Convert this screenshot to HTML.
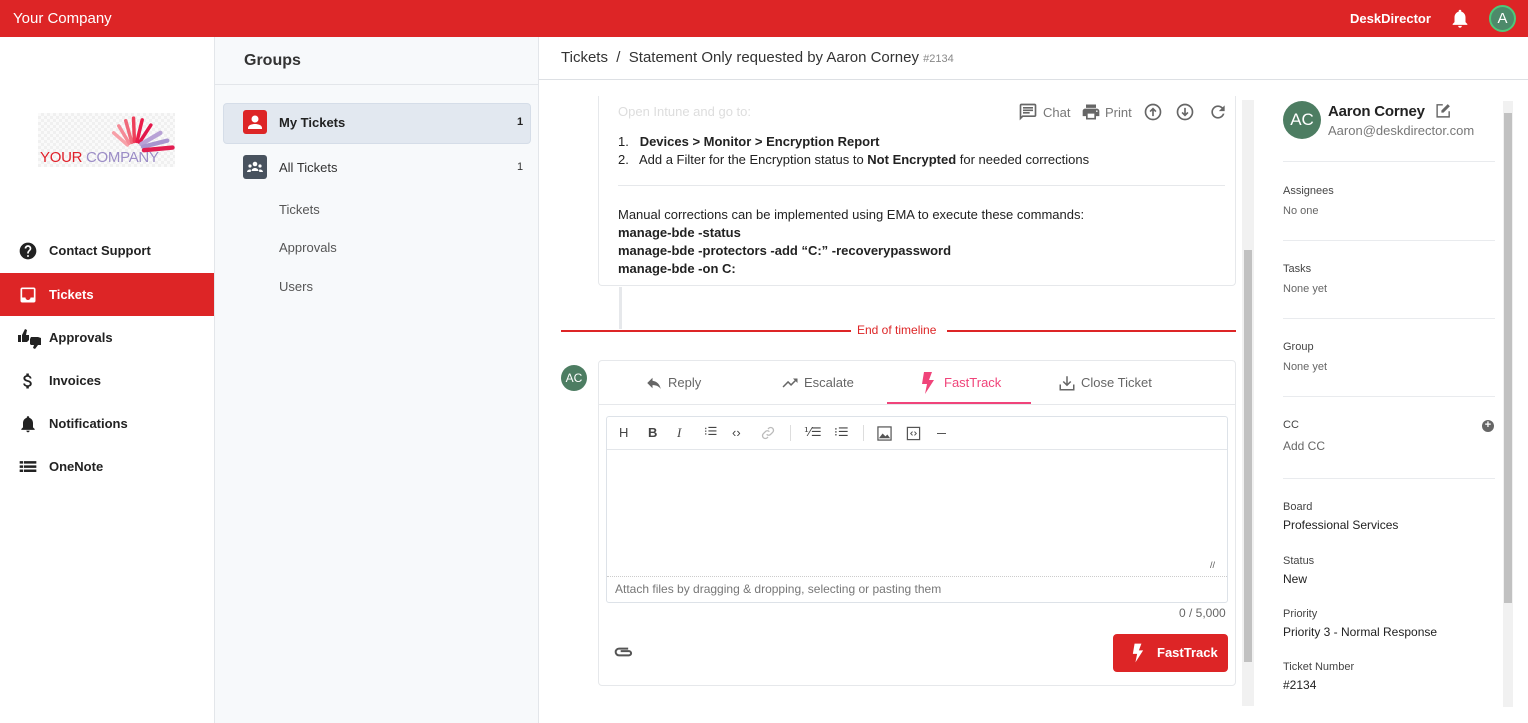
<!DOCTYPE html>
<html><head><meta charset="utf-8"><style>
*{box-sizing:border-box;margin:0;padding:0}
body{width:1528px;height:723px;overflow:hidden;font-family:"Liberation Sans",Arial,sans-serif;background:#fff;position:relative;color:#222}
.a{position:absolute}
.top{left:0;top:0;width:1528px;height:37px;background:#dd2526;color:#fff}
.nav{left:0;top:37px;width:215px;height:686px;background:#fff;border-right:1px solid #e3e6ea}
.ni{position:absolute;left:0;width:214px;height:43px;font-size:13px;font-weight:bold;color:#222;display:flex;align-items:center;padding-left:49px}
.ni svg{position:absolute;left:18px}
.grp{left:215px;top:37px;width:324px;height:686px;background:#f7f9fb;border-right:1px solid #e3e6ea}
.gi{position:absolute;left:64px;font-size:13px;color:#555}
.lbl{font-size:11px;color:#444;position:absolute;left:1283px}
.val{font-size:12px;color:#666;position:absolute;left:1283px}
.val2{font-size:13px;color:#222;position:absolute;left:1283px}
.hr{position:absolute;left:1283px;width:212px;height:1px;background:#e9ebee}
.tb{position:absolute;top:425px;color:#444;font-size:13px}
</style></head><body>
<div class="a top">
 <div class="a" style="left:13px;top:10px;font-size:15px">Your Company</div>
 <div class="a" style="left:1350px;top:11px;font-size:13px;font-weight:bold">DeskDirector</div>
 <svg class="a" style="left:1449px;top:7px" width="22" height="23" viewBox="0 0 24 24"><path fill="#fff" d="M12 22c1.1 0 2-.9 2-2h-4c0 1.1.9 2 2 2zm6-6v-5c0-3.07-1.63-5.64-4.5-6.32V4c0-.83-.67-1.5-1.5-1.5s-1.5.67-1.5 1.5v.68C7.64 5.36 6 7.92 6 11v5l-2 2v1h16v-1l-2-2z"/></svg>
 <div class="a" style="left:1489px;top:5px;width:27px;height:27px;border-radius:50%;background:#4d8a6a;border:2px solid #4ec97a;color:#fff;font-size:15px;text-align:center;line-height:23px">A</div>
</div>

<div class="a nav">
 <div class="a" style="left:38px;top:76px;width:137px;height:54px;background:repeating-conic-gradient(#f0f0f0 0 25%,#fafafa 0 50%) 0 0/6px 6px"></div>
 <svg class="a" style="left:98px;top:78px" width="78" height="40" viewBox="0 0 90 45">
  <g stroke-linecap="round" stroke-width="4" fill="none">
   <path d="M34 34 L18 20" stroke="#f7a0a8"/><path d="M36 32 L24 12" stroke="#f58a96"/><path d="M39 31 L32 6" stroke="#f06a7a"/><path d="M42 30 L41 3" stroke="#ee3e5a"/><path d="M45 30 L51 5" stroke="#ea1d4a"/><path d="M48 31 L61 11" stroke="#e3174a"/>
   <path d="M50 33 L72 20" stroke="#b8a2d6" stroke-width="5"/><path d="M52 36 L80 29" stroke="#a895cf" stroke-width="5"/><path d="M53 40 L86 37" stroke="#e21d50" stroke-width="5"/>
  </g></svg>
 <div class="a" style="left:40px;top:112px;font-size:15px;color:#e0202a;letter-spacing:-.3px">YOUR <span style="color:#9b8cc6">COMPANY</span></div>

 <div class="ni" style="top:192px"><svg width="20" height="20" viewBox="0 0 24 24"><path fill="#222" d="M12 2C6.48 2 2 6.48 2 12s4.48 10 10 10 10-4.48 10-10S17.52 2 12 2zm1 17h-2v-2h2v2zm2.07-7.75l-.9.92C13.45 12.9 13 13.5 13 15h-2v-.5c0-1.1.45-2.1 1.17-2.83l1.24-1.26c.37-.36.59-.86.59-1.41 0-1.1-.9-2-2-2s-2 .9-2 2H8c0-2.210 1.79-4 4-4s4 1.79 4 4c0 .88-.36 1.68-.93 2.25z"/></svg>Contact Support</div>
 <div class="ni" style="top:236px;background:#dd2526;color:#fff"><svg width="20" height="20" viewBox="0 0 24 24"><path fill="#fff" d="M19 3H5c-1.1 0-2 .9-2 2v14c0 1.1.9 2 2 2h14c1.1 0 2-.9 2-2V5c0-1.1-.9-2-2-2zm0 12h-4c0 1.66-1.34 3-3 3s-3-1.34-3-3H5V5h14v10z"/></svg>Tickets</div>
 <div class="ni" style="top:279px"><svg width="24" height="22" viewBox="0 0 24 22"><path fill="#222" d="M0 8h3v7H0zM4 8l3-6 2 1-1 5h3v5l-2 2H4z M13 10h7l3 1v7h-3l-3 4-2-1 1-3h-3l-1-1v-5z"/></svg>Approvals</div>
 <div class="ni" style="top:322px"><svg width="20" height="20" viewBox="0 0 24 24"><path fill="#222" d="M11.8 10.9c-2.27-.59-3-1.2-3-2.15 0-1.09 1.01-1.85 2.7-1.850 1.78 0 2.44.85 2.5 2.1h2.21c-.07-1.72-1.12-3.3-3.21-3.81V3h-3v2.16c-1.94.42-3.5 1.68-3.5 3.61 0 2.31 1.91 3.46 4.7 4.13 2.5.6 3 1.48 3 2.41 0 .69-.49 1.79-2.7 1.79-2.06 0-2.87-.92-2.98-2.1h-2.2c.12 2.19 1.76 3.42 3.68 3.83V21h3v-2.15c1.95-.37 3.5-1.5 3.5-3.55 0-2.84-2.43-3.81-4.7-4.4z"/></svg>Invoices</div>
 <div class="ni" style="top:365px"><svg width="20" height="20" viewBox="0 0 24 24"><path fill="#222" d="M12 22c1.1 0 2-.9 2-2h-4c0 1.1.9 2 2 2zm6-6v-5c0-3.07-1.63-5.64-4.5-6.32V4c0-.83-.67-1.5-1.5-1.5s-1.5.67-1.5 1.5v.68C7.64 5.36 6 7.920 6 11v5l-2 2v1h16v-1l-2-2z"/></svg>Notifications</div>
 <div class="ni" style="top:408px"><svg width="20" height="20" viewBox="0 0 24 24"><path fill="#222" d="M2 5h4v3H2zm5 0h15v3H7zM2 10h4v3H2zm5 0h15v3H7zM2 15h4v3H2zm5 0h15v3H7z"/></svg>OneNote</div>
</div>

<div class="a grp">
 <div class="a" style="left:0;top:0;width:323px;height:48px;border-bottom:1px solid #e3e6ea"></div>
 <div class="a" style="left:29px;top:15px;font-size:16px;font-weight:bold;color:#333">Groups</div>
 <div class="a" style="left:8px;top:66px;width:308px;height:41px;background:#e2e8f0;border:1px solid #d5dde8;border-radius:4px"></div>
 <div class="a" style="left:28px;top:73px;width:24px;height:24px;background:#dd2526;border-radius:3px"><svg width="24" height="24" viewBox="0 0 24 24"><circle cx="12" cy="9" r="3.5" fill="#fff"/><path d="M5 18c0-3 4-4 7-4s7 1 7 4v1H5z" fill="#fff"/></svg></div>
 <div class="a" style="left:64px;top:78px;font-size:13px;font-weight:bold;color:#222">My Tickets</div>
 <div class="a" style="left:302px;top:79px;font-size:11px;font-weight:bold">1</div>
 <div class="a" style="left:28px;top:118px;width:24px;height:24px;background:#48525e;border-radius:3px"><svg width="24" height="24" viewBox="0 0 24 24" fill="#fff"><circle cx="12" cy="9" r="2.3"/><circle cx="7" cy="11" r="1.6"/><circle cx="17" cy="11" r="1.6"/><path d="M8.5 16c0-2 2-3 3.5-3s3.5 1 3.5 3zM4 17c0-1.5 1.5-2.5 3-2.5l1 .3-.3 2.2zM20 17c0-1.5-1.5-2.5-3-2.5l-1 .3.3 2.2z"/></svg></div>
 <div class="a" style="left:64px;top:123px;font-size:13px;color:#333">All Tickets</div>
 <div class="a" style="left:302px;top:124px;font-size:11px;color:#333">1</div>
 <div class="gi" style="top:165px">Tickets</div>
 <div class="gi" style="top:203px">Approvals</div>
 <div class="gi" style="top:242px">Users</div>
</div>

<div class="a" style="left:539px;top:37px;width:989px;height:43px;border-bottom:1px solid #dde0e4"></div>
<div class="a" style="left:561px;top:49px;font-size:15px;color:#333">Tickets &nbsp;/&nbsp; Statement Only requested by Aaron Corney <span style="font-size:11px;color:#888">#2134</span></div>

<div class="a" style="left:598px;top:96px;width:638px;height:190px;border:1px solid #e6e8eb;border-top:none;border-radius:0 0 4px 4px"></div>
<div class="a" style="left:618px;top:104px;font-size:13px;color:#ddd">Open Intune and go to:</div>
<div class="a" style="left:618px;top:133px;font-size:13px;color:#222;line-height:18px">1.&nbsp;&nbsp; <b>Devices &gt; Monitor &gt; Encryption Report</b><br>2.&nbsp;&nbsp; Add a Filter for the Encryption status to <b>Not Encrypted</b> for needed corrections</div>
<div class="a" style="left:618px;top:185px;width:607px;height:1px;background:#e6e8eb"></div>
<div class="a" style="left:618px;top:206px;font-size:13px;color:#222;line-height:18px">Manual corrections can be implemented using EMA to execute these commands:<br><b>manage-bde -status<br>manage-bde -protectors -add “C:” -recoverypassword<br>manage-bde -on C:</b></div>
<div class="a" style="left:619px;top:287px;width:3px;height:42px;background:#e6e8eb"></div>
<svg class="a" style="left:1018px;top:102px" width="20" height="20" viewBox="0 0 24 24"><path fill="#666" d="M20 2H4c-1.1 0-2 .9-2 2v18l4-4h14c1.1 0 2-.9 2-2V4c0-1.1-.9-2-2-2zm0 14H5.2L4 17.2V4h16v12zM6 12h8v2H6zm0-3h12v2H6zm0-3h12v2H6z"/></svg>
<div class="a" style="left:1043px;top:105px;font-size:13px;color:#777">Chat</div>
<svg class="a" style="left:1081px;top:102px" width="20" height="20" viewBox="0 0 24 24"><path fill="#666" d="M19 8H5c-1.66 0-3 1.34-3 3v6h4v4h12v-4h4v-6c0-1.66-1.34-3-3-3zm-3 11H8v-5h8v5zm3-7c-.55 0-1-.45-1-1s.45-1 1-1 1 .45 1 1-.45 1-1 1zm-1-9H6v4h12V3z"/></svg>
<div class="a" style="left:1105px;top:105px;font-size:13px;color:#777">Print</div>
<svg class="a" style="left:1143px;top:102px" width="20" height="20" viewBox="0 0 24 24" fill="none" stroke="#666" stroke-width="2"><circle cx="12" cy="12" r="9"/><path d="M12 17V8M8.5 11.5 12 8l3.5 3.5"/></svg>
<svg class="a" style="left:1175px;top:102px" width="20" height="20" viewBox="0 0 24 24" fill="none" stroke="#666" stroke-width="2"><circle cx="12" cy="12" r="9"/><path d="M12 7v9M8.5 12.5 12 16l3.5-3.5"/></svg>
<svg class="a" style="left:1208px;top:102px" width="20" height="20" viewBox="0 0 24 24"><path fill="#666" d="M17.65 6.35C16.2 4.9 14.21 4 12 4c-4.42 0-7.99 3.58-7.99 8s3.57 8 7.99 8c3.73 0 6.84-2.55 7.73-6h-2.08c-.82 2.33-3.04 4-5.65 4-3.310 0-6-2.69-6-6s2.69-6 6-6c1.66 0 3.14.69 4.22 1.78L13 11h7V4l-2.35 2.35z"/></svg>

<div class="a" style="left:561px;top:330px;width:290px;height:1.5px;background:#dd2526"></div>
<div class="a" style="left:947px;top:330px;width:289px;height:1.5px;background:#dd2526"></div>
<div class="a" style="left:857px;top:323px;font-size:12px;color:#dd2526">End of timeline</div>

<div class="a" style="left:561px;top:365px;width:26px;height:26px;border-radius:50%;background:#4d7d62;color:#fff;font-size:12px;text-align:center;line-height:26px">AC</div>
<div class="a" style="left:598px;top:360px;width:638px;height:326px;border:1px solid #e6e8eb;border-radius:4px"></div>
<div class="a" style="left:599px;top:404px;width:636px;height:1px;background:#e6e8eb"></div>
<div class="a" style="left:887px;top:402px;width:144px;height:2px;background:#f0447a"></div>
<svg class="a" style="left:645px;top:374px" width="18" height="18" viewBox="0 0 24 24"><path fill="#666" d="M10 9V5l-7 7 7 7v-4.1c5 0 8.5 1.6 11 5.1-1-5-4-10-11-11z"/></svg>
<div class="a" style="left:668px;top:375px;font-size:13px;color:#666">Reply</div>
<svg class="a" style="left:780px;top:374px" width="20" height="18" viewBox="0 0 24 24"><path fill="#666" d="M16 6l2.29 2.29-4.88 4.88-4-4L2 16.59 3.41 18l6-6 4 4 6.3-6.29L22 12V6z"/></svg>
<div class="a" style="left:804px;top:375px;font-size:13px;color:#666">Escalate</div>
<svg class="a" style="left:921px;top:372px" width="14" height="22" viewBox="0 0 14 22"><path fill="#f0447a" d="M3 0h8l-3 8h5L4 22l2-10H1z"/></svg>
<div class="a" style="left:944px;top:375px;font-size:13px;color:#f0447a">FastTrack</div>
<svg class="a" style="left:1058px;top:373px" width="18" height="20" viewBox="0 0 24 24"><path fill="none" stroke="#666" stroke-width="2" d="M12 3v12M7 10l5 5 5-5M3 14v7h18v-7"/></svg>
<div class="a" style="left:1081px;top:375px;font-size:13px;color:#666">Close Ticket</div>

<div class="a" style="left:606px;top:416px;width:622px;height:187px;border:1px solid #dde2e8;border-radius:3px"></div>
<div class="a" style="left:607px;top:449px;width:620px;height:1px;background:#e3e6ea"></div>
<div class="a" style="left:607px;top:576px;width:620px;border-top:1px dotted #ccc"></div>
<div class="tb" style="left:619px">H</div>
<div class="tb" style="left:648px;font-weight:bold">B</div>
<div class="tb" style="left:677px;font-style:italic;font-family:'Liberation Serif',serif">I</div>
<div class="tb" style="left:704px;font-size:11px">⁝☰</div>
<div class="tb" style="left:732px">‹›</div>
<svg class="a" style="left:760px;top:425px" width="16" height="16" viewBox="0 0 24 24"><path fill="none" stroke="#bbb" stroke-width="2" d="M10 14a4 4 0 0 0 6 0l3-3a4 4 0 0 0-6-6l-1 1M14 10a4 4 0 0 0-6 0l-3 3a4 4 0 0 0 6 6l1-1"/></svg>
<div class="a" style="left:790px;top:425px;width:1px;height:16px;background:#ddd"></div>
<div class="tb" style="left:804px;font-size:12px">⅟☰</div>
<div class="tb" style="left:834px;font-size:12px">⁝☰</div>
<div class="a" style="left:863px;top:425px;width:1px;height:16px;background:#ddd"></div>
<svg class="a" style="left:877px;top:426px" width="15" height="15" viewBox="0 0 16 16"><rect x="1" y="1" width="14" height="14" fill="none" stroke="#555" stroke-width="1.3"/><path d="M2 13l4-5 3 3 2-2 3 4z" fill="#555"/></svg>
<svg class="a" style="left:906px;top:426px" width="15" height="15" viewBox="0 0 16 16"><rect x="1.5" y="1.5" width="13" height="13" fill="none" stroke="#555" stroke-width="1.3"/><path d="M7 6 5 8l2 2M9 6l2 2-2 2" fill="none" stroke="#555"/></svg>
<div class="a" style="left:937px;top:433px;width:9px;height:1.3px;background:#555"></div>
<div class="a" style="left:1210px;top:560px;font-size:9px;color:#555">//</div>
<div class="a" style="left:615px;top:582px;font-size:12px;color:#777">Attach files by dragging &amp; dropping, selecting or pasting them</div>
<div class="a" style="left:1179px;top:606px;font-size:12px;color:#666">0 / 5,000</div>
<svg class="a" style="left:614px;top:645px" width="20" height="14" viewBox="0 0 24 16"><path fill="none" stroke="#555" stroke-width="2.4" d="M17 4H6a4 4 0 0 0 0 8h12a2.5 2.5 0 0 0 0-5H8"/></svg>
<div class="a" style="left:1113px;top:634px;width:115px;height:38px;background:#dd2526;border-radius:4px"></div>
<svg class="a" style="left:1132px;top:643px" width="12" height="20" viewBox="0 0 14 22"><path fill="#fff" d="M3 0h8l-3 8h5L4 22l2-10H1z"/></svg>
<div class="a" style="left:1157px;top:645px;font-size:13px;font-weight:bold;color:#fff">FastTrack</div>

<div class="a" style="left:1242px;top:100px;width:12px;height:606px;background:#f1f1f1"></div>
<div class="a" style="left:1244px;top:250px;width:8px;height:412px;background:#c1c1c1"></div>

<div class="a" style="left:1283px;top:101px;width:38px;height:38px;border-radius:50%;background:#4d7d62;color:#fff;font-size:17px;text-align:center;line-height:38px">AC</div>
<div class="a" style="left:1328px;top:103px;font-size:15px;font-weight:bold;color:#222;letter-spacing:-.2px">Aaron Corney</div>
<svg class="a" style="left:1435px;top:102px" width="17" height="17" viewBox="0 0 24 24"><path fill="none" stroke="#666" stroke-width="2" d="M20 13v8H3V4h8"/><path fill="#666" d="M9 15v-3l9-9 3 3-9 9z"/></svg>
<div class="a" style="left:1328px;top:123px;font-size:13px;color:#777">Aaron@deskdirector.com</div>
<div class="hr" style="top:161px"></div>
<div class="lbl" style="top:185px">Assignees</div><div class="val" style="top:205px;font-size:11px">No one</div>
<div class="hr" style="top:240px"></div>
<div class="lbl" style="top:263px">Tasks</div><div class="val" style="top:283px;font-size:11px">None yet</div>
<div class="hr" style="top:318px"></div>
<div class="lbl" style="top:341px">Group</div><div class="val" style="top:361px;font-size:11px">None yet</div>
<div class="hr" style="top:396px"></div>
<div class="lbl" style="top:419px">CC</div>
<div class="a" style="left:1482px;top:420px;width:12px;height:12px;border-radius:50%;background:#666;color:#fff;font-size:11px;line-height:11px;text-align:center;font-weight:bold">+</div>
<div class="val" style="top:439px">Add CC</div>
<div class="hr" style="top:478px"></div>
<div class="lbl" style="top:501px">Board</div><div class="val2" style="top:518px;font-size:12px">Professional Services</div>
<div class="lbl" style="top:555px">Status</div><div class="val2" style="top:572px;font-size:12px">New</div>
<div class="lbl" style="top:608px">Priority</div><div class="val2" style="top:625px;font-size:12px">Priority 3 - Normal Response</div>
<div class="lbl" style="top:661px">Ticket Number</div><div class="val2" style="top:678px;font-size:12px">#2134</div>
<div class="a" style="left:1503px;top:101px;width:10px;height:606px;background:#f1f1f1"></div>
<div class="a" style="left:1504px;top:113px;width:8px;height:490px;background:#c1c1c1"></div>
</body></html>
